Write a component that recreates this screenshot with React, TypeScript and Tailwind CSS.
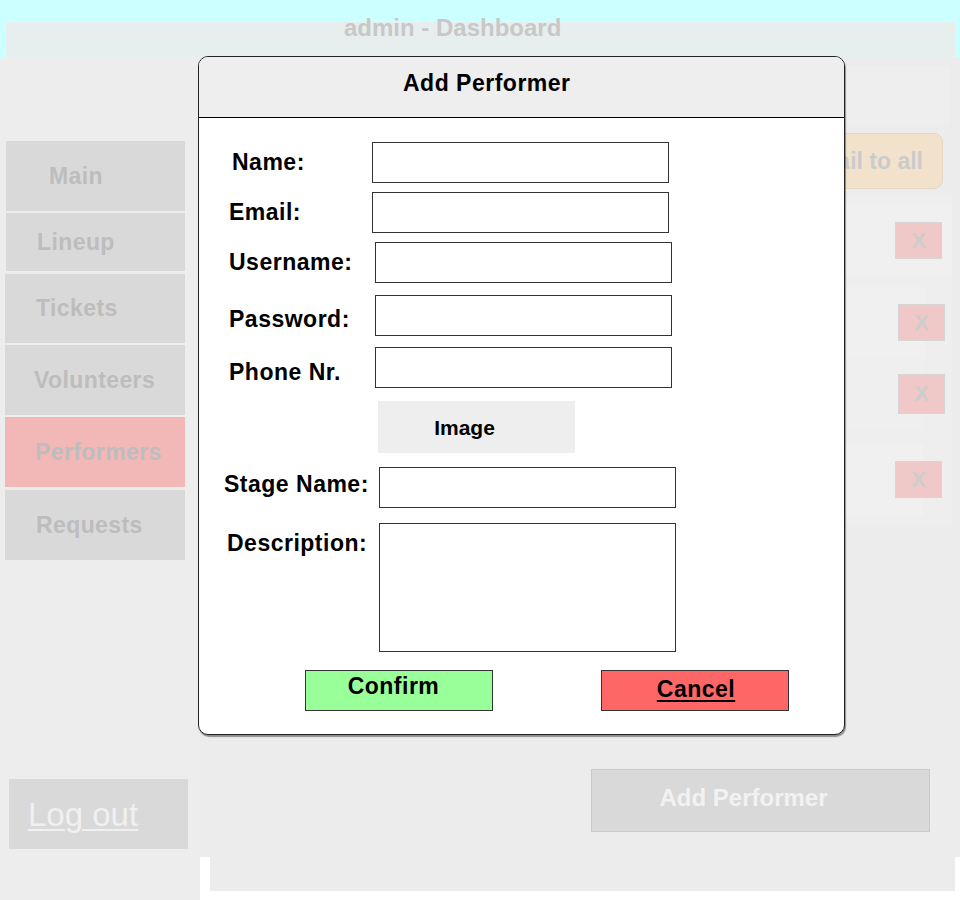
const font = "font-['Liberation_Sans',Arial,sans-serif]";

const navItems = [
  { label: "Main", box: "h-[70px] ml-[6px] w-[179px] pl-[43px] bg-[#d9d9d9]", gap: "mt-[84px]" },
  { label: "Lineup", box: "h-[58px] ml-[6px] w-[179px] pl-[31px] bg-[#d9d9d9]", gap: "mt-[2px]" },
  { label: "Tickets", box: "h-[69px] ml-[5px] w-[180px] pl-[31px] bg-[#d9d9d9]", gap: "mt-[3px]" },
  { label: "Volunteers", box: "h-[70px] ml-[5px] w-[180px] pl-[29px] bg-[#d9d9d9]", gap: "mt-[2px]" },
  { label: "Performers", box: "h-[70px] ml-[5px] w-[180px] pl-[30px] bg-[#f2b8b8]", gap: "mt-[2px]" },
  { label: "Requests", box: "h-[70px] ml-[5px] w-[180px] pl-[31px] bg-[#d9d9d9]", gap: "mt-[3px]" },
];

function Sidebar() {
  return (
    <div className="w-[200px] h-[843px] bg-[#ededed] flex flex-col">
      {navItems.map((item) => (
        <div
          key={item.label}
          className={`${item.gap} ${item.box} flex items-center text-[23px] leading-[23px] font-bold tracking-[0.4px] text-[#bdbdbd]`}
        >
          {item.label}
        </div>
      ))}
      <div className="mt-[219px] ml-[9px] w-[179px] h-[70px] bg-[#d9d9d9] flex items-center pl-[19px] text-[33px] leading-[33px] text-[#f0f0f0] underline underline-offset-[3px] decoration-[2px]">
        Log out
      </div>
    </div>
  );
}

function XButton({ className }: { className: string }) {
  return (
    <div
      className={`${className} w-[47px] bg-[#f0c8c8] border border-[#d6d6d6] flex items-center justify-center text-[22px] leading-[22px] font-bold text-[#cdcdcd]`}
    >
      X
    </div>
  );
}

function MainArea() {
  return (
    <div className="w-[760px] h-[843px] flex flex-col">
      <div className="h-[800px] bg-[#ececec] flex flex-col">
        <div className="mt-[9px] ml-[10px] w-[740px] h-[59px] bg-[#eeeeee]"></div>
        <div className="mt-[8px] flex justify-end pr-[17px]">
          <div className="w-[221px] h-[56px] rounded-[9px] bg-[#f2e2cb] border border-[#e4d7c3] flex items-center justify-end pr-[19px] text-[23px] leading-[23px] font-bold text-[#cbcbcb]">
            Send mail to all
          </div>
        </div>
        <div className="mt-[6px] ml-[10px] w-[742px] h-[330px] bg-[#eeeeee] flex flex-col pt-[10px]">
          <div className="h-[71px] bg-[#f0f0f0] flex items-center justify-end pr-[10px]">
            <XButton className="h-[37px]" />
          </div>
          <div className="mt-[11px] h-[71px] w-[715px] bg-[#f0f0f0] flex items-center justify-end">
            <div className="-mr-[20px]">
              <XButton className="h-[37px]" />
            </div>
          </div>
          <div className="h-[72px] w-[715px] bg-[#efefef] flex items-center justify-end">
            <div className="-mr-[20px]">
              <XButton className="h-[40px]" />
            </div>
          </div>
          <div className="mt-[14px] h-[71px] w-[713px] bg-[#f0f0f0] flex items-center justify-end">
            <div className="-mr-[19px]">
              <XButton className="h-[37px]" />
            </div>
          </div>
        </div>
        <div className="mt-[244px] flex justify-end pr-[30px]">
          <div className="w-[339px] h-[63px] bg-[#d9d9d9] border border-[#cacaca] flex items-center justify-center pb-[6px] pr-[34px] text-[24px] leading-[24px] font-bold text-[#f2f2f2]">
            Add Performer
          </div>
        </div>
      </div>
      <div className="ml-[10px] w-[745px] h-[34px] bg-[#ececec]"></div>
    </div>
  );
}

function Field({
  label,
  pad,
  labelW,
  gap,
  labelCls = "",
}: {
  label: string;
  pad: string;
  labelW: string;
  gap: string;
  labelCls?: string;
}) {
  return (
    <div className={`${gap} flex items-center ${pad}`}>
      <div className={`${labelW} ${labelCls} text-[23px] leading-[23px] font-bold tracking-[0.5px] text-black`}>
        {label}
      </div>
      <div className="w-[297px] h-[41px] border border-[#333] bg-white"></div>
    </div>
  );
}

function Modal() {
  return (
    <div className="absolute left-[198px] top-[56px] w-[647px] h-[679px] rounded-[10px] border border-[#222] bg-white overflow-hidden shadow-[1px_2px_1px_rgba(0,0,0,0.4)] flex flex-col">
      <div className="h-[61px] bg-[#eeeeee] border-b border-black pl-[204px] pt-[15px] text-[23px] leading-[23px] font-bold tracking-[0.5px] text-black">
        Add Performer
      </div>
      <div className="flex flex-col pt-[24px]">
        <Field label="Name:" gap="" pad="pl-[33px]" labelW="w-[140px]" />
        <Field label="Email:" gap="mt-[9px]" pad="pl-[30px]" labelW="w-[143px]" />
        <Field label="Username:" gap="mt-[9px]" pad="pl-[30px]" labelW="w-[146px]" />
        <Field label="Password:" gap="mt-[12px]" pad="pl-[30px]" labelW="w-[146px]" labelCls="pt-[8px]" />
        <Field label="Phone Nr." gap="mt-[11px]" pad="pl-[30px]" labelW="w-[146px]" labelCls="pt-[9px]" />
        <div className="mt-[13px] ml-[179px] w-[197px] h-[52px] bg-[#eeeeee] flex items-center justify-center pr-[24px] text-[21px] leading-[21px] font-bold text-black">
          Image
        </div>
        <Field label="Stage Name:" gap="mt-[14px]" pad="pl-[25px]" labelW="w-[155px]" labelCls="pb-[7px]" />
        <div className="mt-[15px] flex items-start pl-[28px]">
          <div className="w-[152px] mt-[9px] text-[23px] leading-[23px] font-bold tracking-[0.5px] text-black">Description:</div>
          <div className="w-[297px] h-[129px] border border-[#333] bg-white"></div>
        </div>
        <div className="mt-[18px] flex pl-[106px]">
          <div className="w-[188px] h-[41px] bg-[#99ff99] border border-[#333] flex items-center justify-center pb-[8px] pr-[11px] text-[23px] leading-[23px] font-bold tracking-[0.5px] text-black">
            Confirm
          </div>
          <div className="ml-[108px] w-[188px] h-[41px] bg-[#ff6666] border border-[#333] flex items-center justify-center pb-[3px] pl-[2px] text-[23px] leading-[23px] font-bold tracking-[0.5px] text-black underline underline-offset-[3px] decoration-[2px]">
            Cancel
          </div>
        </div>
      </div>
    </div>
  );
}

export default function App() {
  return (
    <div className={`${font} relative w-[960px] h-[900px] bg-white overflow-hidden`}>
      <div className="relative h-[57px] bg-[#ccffff] pt-[22px] pl-[6px]">
        <div className="w-[949px] h-[35px] bg-[#e6efee]"></div>
        <div className="absolute left-[344px] top-[16px] text-[24px] leading-[24px] font-bold text-[#c8c8c8]">
          admin - Dashboard
        </div>
      </div>
      <div className="flex">
        <Sidebar />
        <MainArea />
      </div>
      <Modal />
    </div>
  );
}
